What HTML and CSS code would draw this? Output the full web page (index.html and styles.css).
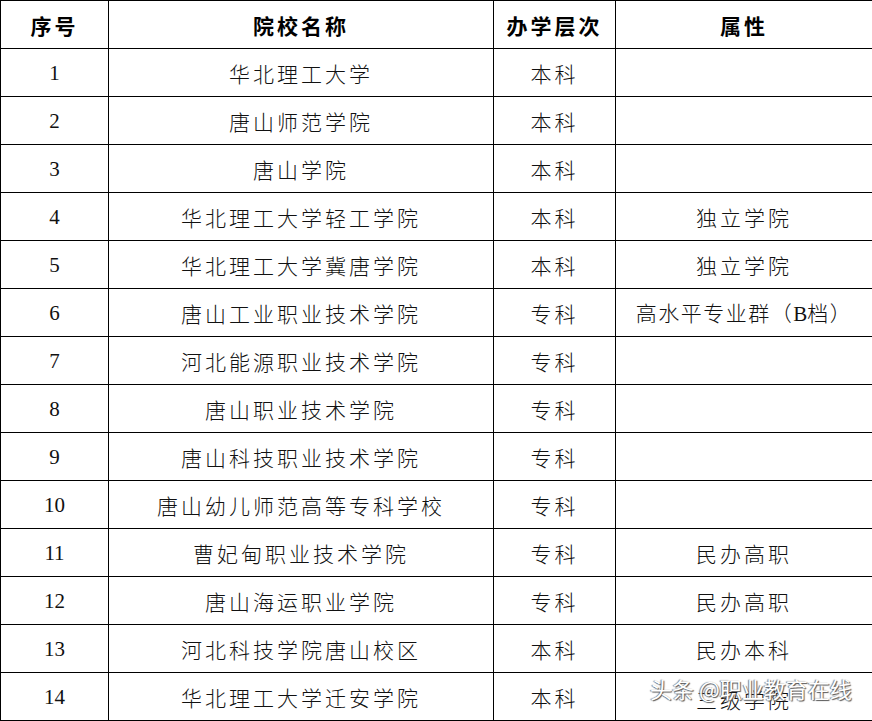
FILE: index.html
```html
<!DOCTYPE html>
<html lang="zh">
<head>
<meta charset="utf-8">
<title>唐山院校</title>
<link rel="stylesheet" href="styles.css">
</head>
<body>
<div class="wrap">
<table class="tbl">
<colgroup>
<col class="c1"><col class="c2"><col class="c3"><col class="c4">
</colgroup>
<thead>
<tr><th>序号</th><th>院校名称</th><th>办学层次</th><th>属性</th></tr>
</thead>
<tbody>
<tr><td class="num">1</td><td>华北理工大学</td><td>本科</td><td></td></tr>
<tr><td class="num">2</td><td>唐山师范学院</td><td>本科</td><td></td></tr>
<tr><td class="num">3</td><td>唐山学院</td><td>本科</td><td></td></tr>
<tr><td class="num">4</td><td>华北理工大学轻工学院</td><td>本科</td><td>独立学院</td></tr>
<tr><td class="num">5</td><td>华北理工大学冀唐学院</td><td>本科</td><td>独立学院</td></tr>
<tr><td class="num">6</td><td>唐山工业职业技术学院</td><td>专科</td><td class="tight">高水平专业群（<span class="lat">B</span>档）</td></tr>
<tr><td class="num">7</td><td>河北能源职业技术学院</td><td>专科</td><td></td></tr>
<tr><td class="num">8</td><td>唐山职业技术学院</td><td>专科</td><td></td></tr>
<tr><td class="num">9</td><td>唐山科技职业技术学院</td><td>专科</td><td></td></tr>
<tr><td class="num">10</td><td>唐山幼儿师范高等专科学校</td><td>专科</td><td></td></tr>
<tr><td class="num">11</td><td>曹妃甸职业技术学院</td><td>专科</td><td>民办高职</td></tr>
<tr><td class="num">12</td><td>唐山海运职业学院</td><td>专科</td><td>民办高职</td></tr>
<tr><td class="num">13</td><td>河北科技学院唐山校区</td><td>本科</td><td>民办本科</td></tr>
<tr><td class="num">14</td><td>华北理工大学迁安学院</td><td>本科</td><td class="under">三级学院</td></tr>
</tbody>
</table>
<div class="mark">头条 @职业教育在线</div>
</div>
</body>
</html>
```
FILE: styles.css
```css
html, body {
  margin: 0;
  padding: 0;
  background: #fff;
}
.wrap {
  position: relative;
  width: 872px;
}
.tbl {
  border-collapse: collapse;
  table-layout: fixed;
  width: 872px;
  font-family: "Noto Sans CJK SC", sans-serif;
  color: #111;
}
.c1 { width: 108px; }
.c2 { width: 385px; }
.c3 { width: 122px; }
.c4 { width: 257px; }
.tbl th, .tbl td {
  border: 1px solid #000;
  height: 47px;
  padding: 0;
  text-align: center;
  vertical-align: middle;
  font-size: 21px;
  line-height: 24px;
  letter-spacing: 3px;
  font-weight: 300;
}
.tbl th {
  font-weight: 700;
  color: #000;
  letter-spacing: 3px;
}
.tbl td.tight {
  letter-spacing: 1.5px;
}
.tbl td.under {
  padding-top: 4px;
  height: 43px;
}
.tbl td.num {
  font-family: "Liberation Serif", serif;
  font-size: 21px;
  letter-spacing: 0;
  font-weight: 400;
}
.lat {
  font-family: "Liberation Serif", serif;
  letter-spacing: 0;
}
.mark {
  position: absolute;
  left: 650px;
  top: 674px;
  font-family: "Noto Sans CJK SC", sans-serif;
  font-size: 22px;
  line-height: 28px;
  color: #fff;
  letter-spacing: 0;
  text-shadow: 1px 1px 1px #555, -1px 0 1px #777;
}
```
